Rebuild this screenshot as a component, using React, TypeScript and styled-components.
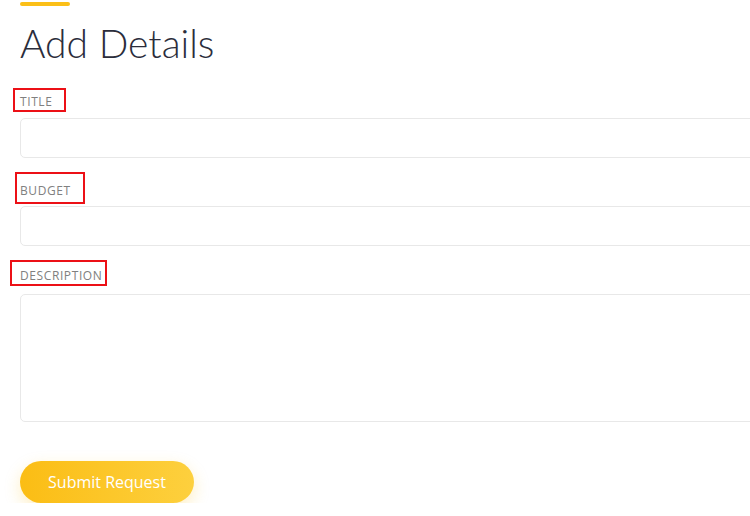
import React from "react";
import styled, { createGlobalStyle } from "styled-components";

const GlobalStyle = createGlobalStyle`
  html, body {
    margin: 0;
    padding: 0;
    background: #fff;
    overflow: hidden;
  }
  body {
    font-family: "Open Sans", "Liberation Sans", sans-serif;
  }
`;

const Page = styled.div`
  padding: 2px 0 0 20px;
  width: 800px;
`;

const Accent = styled.div`
  width: 50px;
  height: 4px;
  border-radius: 2px;
  background: #fbbf18;
`;

const Heading = styled.h1`
  margin: 15px 0 0;
  font-family: "Lato", "Open Sans", sans-serif;
  font-weight: 300;
  font-size: 39px;
  line-height: 44px;
  color: #2b2d3b;
`;

const Form = styled.form`
  display: flex;
  flex-direction: column;
`;

const Field = styled.div<{ $top: number }>`
  display: flex;
  flex-direction: column;
  align-items: flex-start;
  margin-top: ${(p) => p.$top}px;
`;

// the red boxes round the labels are annotation outlines in the shot
const Label = styled.label<{ $pad: [number, number, number, number] }>`
  display: inline-block;
  border: 2px solid #ec1016;
  padding: ${(p) => p.$pad.map((v) => `${v}px`).join(" ")};
  margin-left: ${(p) => -(p.$pad[3] + 2)}px;
  font-size: 12px;
  line-height: 14px;
  letter-spacing: 0.6px;
  color: #808080;
  text-transform: uppercase;
`;

const Input = styled.input`
  display: block;
  box-sizing: border-box;
  width: 760px;
  height: 40px;
  border: 1px solid #e8e8e8;
  border-radius: 5px;
  background: #fff;
  outline: none;
`;

const TextArea = styled.textarea`
  display: block;
  box-sizing: border-box;
  width: 760px;
  height: 128px;
  border: 1px solid #e8e8e8;
  border-radius: 5px;
  background: #fff;
  resize: none;
  outline: none;
`;

const Gap = styled.div<{ $h: number }>`
  height: ${(p) => p.$h}px;
`;

const Submit = styled.button`
  align-self: flex-start;
  margin-top: 39px;
  width: 174px;
  height: 42px;
  border: none;
  border-radius: 21px;
  background: linear-gradient(90deg, #fbbd14 0%, #fdd03e 100%);
  box-shadow: 0 6px 16px rgba(251, 191, 24, 0.25);
  color: #fff;
  font-family: "Open Sans", sans-serif;
  font-size: 16px;
  font-weight: 500;
  cursor: pointer;
`;

export default function App() {
  return (
    <Page>
      <GlobalStyle />
      <Accent />
      <Heading>Add Details</Heading>
      <Form onSubmit={(e) => e.preventDefault()}>
        <Field $top={23}>
          <Label $pad={[5, 11, 1, 5]}>Title</Label>
          <Gap $h={6} />
          <Input type="text" />
        </Field>
        <Field $top={14}>
          <Label $pad={[10, 12, 4, 3]}>Budget</Label>
          <Gap $h={2} />
          <Input type="text" />
        </Field>
        <Field $top={14}>
          <Label $pad={[7, 3, 1, 8]}>Description</Label>
          <Gap $h={8} />
          <TextArea />
        </Field>
        <Submit type="submit">Submit Request</Submit>
      </Form>
    </Page>
  );
}
